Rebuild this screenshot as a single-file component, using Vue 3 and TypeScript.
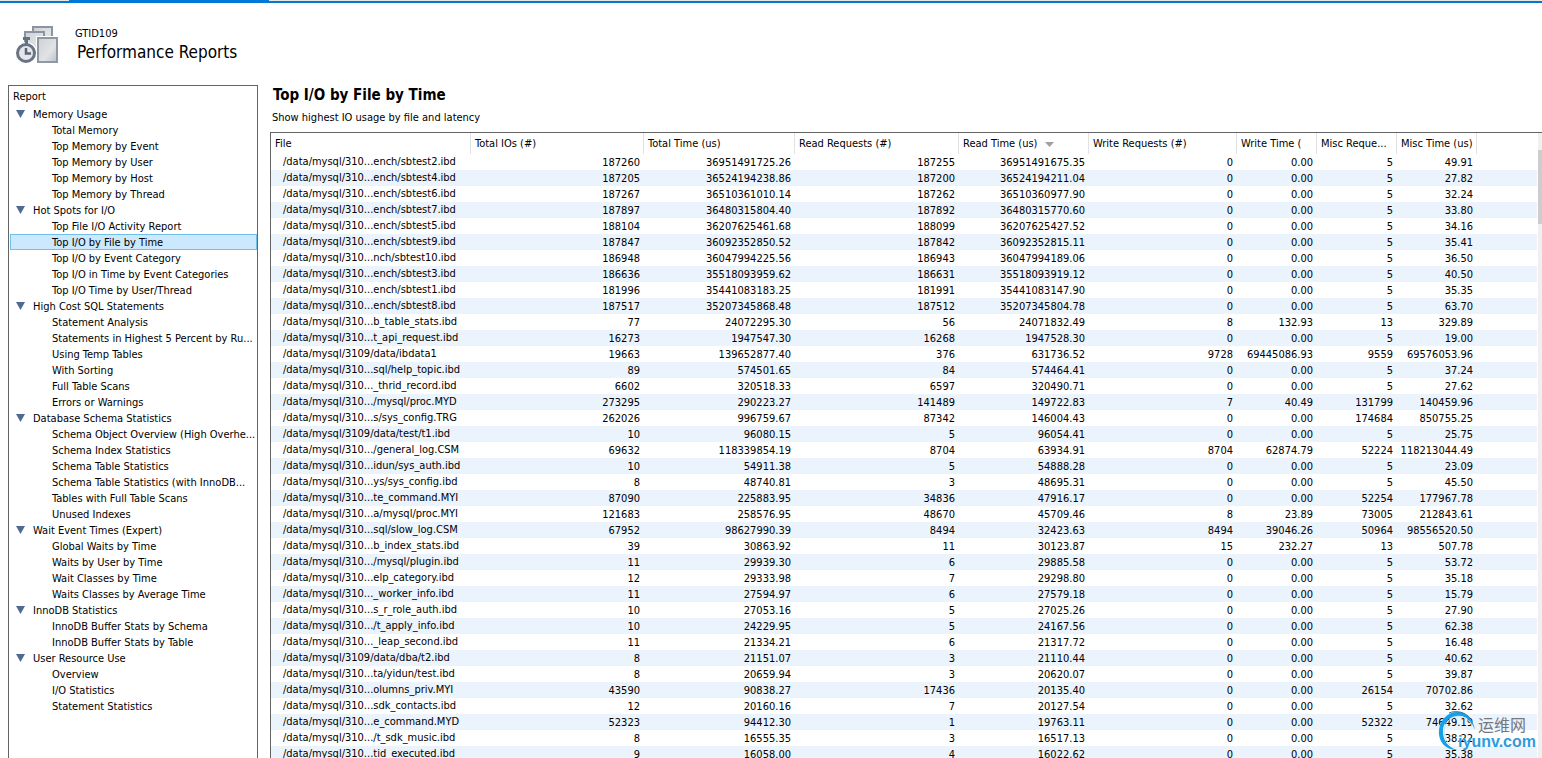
<script setup lang="ts">
import { ref } from 'vue'

interface Group {
  name: string
  items: string[]
}

interface Column {
  label: string
  width: number
  sorted?: boolean
}

const groups: Group[] = [
  {
    name: 'Memory Usage',
    items: ['Total Memory', 'Top Memory by Event', 'Top Memory by User', 'Top Memory by Host', 'Top Memory by Thread'],
  },
  {
    name: 'Hot Spots for I/O',
    items: [
      'Top File I/O Activity Report',
      'Top I/O by File by Time',
      'Top I/O by Event Category',
      'Top I/O in Time by Event Categories',
      'Top I/O Time by User/Thread',
    ],
  },
  {
    name: 'High Cost SQL Statements',
    items: [
      'Statement Analysis',
      'Statements in Highest 5 Percent by Ru...',
      'Using Temp Tables',
      'With Sorting',
      'Full Table Scans',
      'Errors or Warnings',
    ],
  },
  {
    name: 'Database Schema Statistics',
    items: [
      'Schema Object Overview (High Overhe...',
      'Schema Index Statistics',
      'Schema Table Statistics',
      'Schema Table Statistics (with InnoDB...',
      'Tables with Full Table Scans',
      'Unused Indexes',
    ],
  },
  {
    name: 'Wait Event Times (Expert)',
    items: ['Global Waits by Time', 'Waits by User by Time', 'Wait Classes by Time', 'Waits Classes by Average Time'],
  },
  { name: 'InnoDB Statistics', items: ['InnoDB Buffer Stats by Schema', 'InnoDB Buffer Stats by Table'] },
  { name: 'User Resource Use', items: ['Overview', 'I/O Statistics', 'Statement Statistics'] },
]

const columns: Column[] = [
  { label: 'File', width: 200 },
  { label: 'Total IOs (#)', width: 173 },
  { label: 'Total Time (us)', width: 151 },
  { label: 'Read Requests (#)', width: 164 },
  { label: 'Read Time (us)', width: 130, sorted: true },
  { label: 'Write Requests (#)', width: 148 },
  { label: 'Write Time (', width: 80 },
  { label: 'Misc Reque...', width: 80 },
  { label: 'Misc Time (us)', width: 80 },
]

const rows: string[][] = `
/data/mysql/310...ench/sbtest2.ibd 187260 36951491725.26 187255 36951491675.35 0 0.00 5 49.91
/data/mysql/310...ench/sbtest4.ibd 187205 36524194238.86 187200 36524194211.04 0 0.00 5 27.82
/data/mysql/310...ench/sbtest6.ibd 187267 36510361010.14 187262 36510360977.90 0 0.00 5 32.24
/data/mysql/310...ench/sbtest7.ibd 187897 36480315804.40 187892 36480315770.60 0 0.00 5 33.80
/data/mysql/310...ench/sbtest5.ibd 188104 36207625461.68 188099 36207625427.52 0 0.00 5 34.16
/data/mysql/310...ench/sbtest9.ibd 187847 36092352850.52 187842 36092352815.11 0 0.00 5 35.41
/data/mysql/310...nch/sbtest10.ibd 186948 36047994225.56 186943 36047994189.06 0 0.00 5 36.50
/data/mysql/310...ench/sbtest3.ibd 186636 35518093959.62 186631 35518093919.12 0 0.00 5 40.50
/data/mysql/310...ench/sbtest1.ibd 181996 35441083183.25 181991 35441083147.90 0 0.00 5 35.35
/data/mysql/310...ench/sbtest8.ibd 187517 35207345868.48 187512 35207345804.78 0 0.00 5 63.70
/data/mysql/310...b_table_stats.ibd 77 24072295.30 56 24071832.49 8 132.93 13 329.89
/data/mysql/310...t_api_request.ibd 16273 1947547.30 16268 1947528.30 0 0.00 5 19.00
/data/mysql/3109/data/ibdata1 19663 139652877.40 376 631736.52 9728 69445086.93 9559 69576053.96
/data/mysql/310...sql/help_topic.ibd 89 574501.65 84 574464.41 0 0.00 5 37.24
/data/mysql/310..._thrid_record.ibd 6602 320518.33 6597 320490.71 0 0.00 5 27.62
/data/mysql/310.../mysql/proc.MYD 273295 290223.27 141489 149722.83 7 40.49 131799 140459.96
/data/mysql/310...s/sys_config.TRG 262026 996759.67 87342 146004.43 0 0.00 174684 850755.25
/data/mysql/3109/data/test/t1.ibd 10 96080.15 5 96054.41 0 0.00 5 25.75
/data/mysql/310.../general_log.CSM 69632 118339854.19 8704 63934.91 8704 62874.79 52224 118213044.49
/data/mysql/310...idun/sys_auth.ibd 10 54911.38 5 54888.28 0 0.00 5 23.09
/data/mysql/310...ys/sys_config.ibd 8 48740.81 3 48695.31 0 0.00 5 45.50
/data/mysql/310...te_command.MYI 87090 225883.95 34836 47916.17 0 0.00 52254 177967.78
/data/mysql/310...a/mysql/proc.MYI 121683 258576.95 48670 45709.46 8 23.89 73005 212843.61
/data/mysql/310...sql/slow_log.CSM 67952 98627990.39 8494 32423.63 8494 39046.26 50964 98556520.50
/data/mysql/310...b_index_stats.ibd 39 30863.92 11 30123.87 15 232.27 13 507.78
/data/mysql/310.../mysql/plugin.ibd 11 29939.30 6 29885.58 0 0.00 5 53.72
/data/mysql/310...elp_category.ibd 12 29333.98 7 29298.80 0 0.00 5 35.18
/data/mysql/310..._worker_info.ibd 11 27594.97 6 27579.18 0 0.00 5 15.79
/data/mysql/310...s_r_role_auth.ibd 10 27053.16 5 27025.26 0 0.00 5 27.90
/data/mysql/310.../t_apply_info.ibd 10 24229.95 5 24167.56 0 0.00 5 62.38
/data/mysql/310..._leap_second.ibd 11 21334.21 6 21317.72 0 0.00 5 16.48
/data/mysql/3109/data/dba/t2.ibd 8 21151.07 3 21110.44 0 0.00 5 40.62
/data/mysql/310...ta/yidun/test.ibd 8 20659.94 3 20620.07 0 0.00 5 39.87
/data/mysql/310...olumns_priv.MYI 43590 90838.27 17436 20135.40 0 0.00 26154 70702.86
/data/mysql/310...sdk_contacts.ibd 12 20160.16 7 20127.54 0 0.00 5 32.62
/data/mysql/310...e_command.MYD 52323 94412.30 1 19763.11 0 0.00 52322 74649.19
/data/mysql/310.../t_sdk_music.ibd 8 16555.35 3 16517.13 0 0.00 5 38.22
/data/mysql/310...tid_executed.ibd 9 16058.00 4 16022.62 0 0.00 5 35.38
`
  .trim()
  .split('\n')
  .map((line) => line.split(' '))

const selected = ref('Top I/O by File by Time')
const collapsed = ref<string[]>([])

function toggle(name: string) {
  collapsed.value = collapsed.value.includes(name)
    ? collapsed.value.filter((n) => n !== name)
    : [...collapsed.value, name]
}
</script>

<template>
  <div class="app">
    <div class="tabstrip"><span class="tab-active"></span></div>

    <header class="header">
      <svg class="logo" width="44" height="38" viewBox="0 0 44 38" aria-hidden="true">
        <defs>
          <linearGradient id="sheet" x1="0" y1="0" x2="1" y2="1">
            <stop offset="0" stop-color="#cdd0d5" />
            <stop offset="0.6" stop-color="#e1e3e6" />
            <stop offset="1" stop-color="#bbbfc6" />
          </linearGradient>
        </defs>
        <rect x="18" y="1" width="19" height="20" fill="url(#sheet)" stroke="#8a94a2" stroke-width="2" />
        <rect x="10" y="6" width="19" height="22" fill="url(#sheet)" stroke="#8a94a2" stroke-width="2" />
        <rect x="21" y="10" width="23" height="28" fill="#fff" />
        <rect x="23" y="12" width="19" height="24" fill="url(#sheet)" stroke="#8f98a5" stroke-width="2" />
        <circle cx="11" cy="27" r="11" fill="#fff" />
        <path d="M8 11h7v3h-2v5h-3v-5H8z" fill="#66727f" />
        <circle cx="11" cy="27" r="8.500" fill="#e3e6ea" stroke="#687482" stroke-width="3" />
        <path d="M11 22v5.500h5" fill="none" stroke="#596675" stroke-width="2.500" />
      </svg>
      <div class="heading">
        <div class="server">GTID109</div>
        <h1>Performance Reports</h1>
      </div>
    </header>

    <div class="body">
      <nav class="tree" aria-label="Report">
        <div class="tree-title">Report</div>
        <ul>
          <li v-for="group in groups" :key="group.name">
            <button class="group" type="button" :aria-expanded="!collapsed.includes(group.name)" @click="toggle(group.name)">
              <svg :class="['arrow', { closed: collapsed.includes(group.name) }]" width="9" height="8" viewBox="0 0 9 8">
                <path d="M0 0h9L4.500 8z" fill="#4f6a94" />
              </svg>
              {{ group.name }}
            </button>
            <ul v-if="!collapsed.includes(group.name)">
              <li v-for="item in group.items" :key="item">
                <a href="#" :class="['item', { active: item === selected }]" @click.prevent="selected = item">{{ item }}</a>
              </li>
            </ul>
          </li>
        </ul>
      </nav>

      <main class="report">
        <h2>Top I/O by File by Time</h2>
        <p>Show highest IO usage by file and latency</p>
        <div class="grid">
          <div class="grid-view">
            <table>
              <colgroup>
                <col v-for="col in columns" :key="col.label" :style="{ width: col.width + 'px' }" />
                <col />
              </colgroup>
              <thead>
                <tr>
                  <th v-for="col in columns" :key="col.label" scope="col">
                    {{ col.label }}
                    <svg v-if="col.sorted" class="sort" width="9" height="5" viewBox="0 0 9 5">
                      <path d="M0 0h9L4.500 5z" fill="#a0a0a0" />
                    </svg>
                  </th>
                  <td></td>
                </tr>
              </thead>
              <tbody>
                <tr v-for="row in rows" :key="row[0]">
                  <td v-for="(cell, i) in row" :key="i" :class="i === 0 ? 'file' : 'num'">{{ cell }}</td>
                  <td></td>
                </tr>
              </tbody>
            </table>
          </div>
          <div class="scrollbar"><span class="thumb"></span></div>
        </div>
      </main>
    </div>

    <div class="watermark">
      <svg class="ring" width="38" height="40" viewBox="0 0 38 40" aria-hidden="true">
        <path d="M19 39C7 39 0 30 1 19C2 8 11 0 21 1C29 2 35 8 37 19C33 9 27 4 19 5C10 6 5 12 5 20C5 30 10 36 19 39Z" fill="#18a0e6" />
        <path d="M12 34C5 27 4 17 10 10C17 3 29 5 34 14" fill="none" stroke="#bfe6fa" stroke-width="1" />
        <path d="M11 2C18 -1 27 1 32 7" fill="none" stroke="#2676ad" stroke-width="1" />
      </svg>
      <div class="mark-text">
        <span class="mark-cn">运维网</span>
        <span class="mark-url">iyunv.com</span>
      </div>
    </div>
  </div>
</template>

<style>
html,
body {
  margin: 0;
  background: #fff;
}
</style>

<style scoped>
.app {
  position: relative;
  display: flex;
  flex-direction: column;
  height: 100vh;
  overflow: hidden;
  background: #fff;
  color: #000;
  font-family: "DejaVu Sans Condensed", "Noto Sans", sans-serif;
  font-size: 11px;
  line-height: 16px;
}

.tabstrip {
  flex: none;
  height: 1px;
  padding-left: 69px;
  background: #e6e6e2;
  border-bottom: 2px solid #0078d7;
}

.tab-active {
  display: block;
  width: 200px;
  height: 1px;
  background: #0078d7;
}

.header {
  flex: none;
  display: flex;
  gap: 16px;
  height: 59px;
  padding: 23px 0 0 15px;
}

h1 {
  margin: 0 0 0 2px;
  font-size: 17px;
  font-weight: 400;
  line-height: 20px;
}

.body {
  flex: 1;
  display: flex;
  gap: 12px;
  min-height: 0;
  padding-left: 8px;
}

.tree {
  box-sizing: border-box;
  flex: none;
  width: 250px;
  border: 1px solid #646464;
  border-bottom: 0;
  padding-left: 1px;
  overflow: hidden;
  white-space: nowrap;
}

.tree-title {
  height: 20px;
  padding-left: 3px;
  line-height: 22px;
}

ul {
  margin: 0;
  padding: 0;
  list-style: none;
}

.group {
  display: flex;
  align-items: flex-start;
  gap: 8px;
  width: 100%;
  height: 16px;
  padding: 0 0 0 6px;
  border: 0;
  background: none;
  color: inherit;
  font: inherit;
  line-height: 18px;
  text-align: left;
}

.arrow {
  margin-top: 4px;
}

.arrow.closed {
  transform: rotate(-90deg);
}

.item {
  box-sizing: border-box;
  display: block;
  height: 16px;
  padding-left: 41px;
  border: 1px solid transparent;
  color: inherit;
  line-height: 16px;
  text-decoration: none;
}

.item.active {
  border-color: #70c0e7;
  background: #cce8ff;
}

.report {
  flex: 1;
  display: flex;
  flex-direction: column;
  min-width: 0;
}

h2 {
  margin: 0;
  padding: 0 0 0 3px;
  font-size: 15px;
  font-weight: 700;
  line-height: 20px;
}

.report p {
  margin: 0;
  padding: 5px 0 6px 2px;
}

.grid {
  flex: 1;
  display: flex;
  min-height: 0;
  border-top: 1px solid #646464;
  border-left: 1px solid #646464;
}

.grid-view {
  flex: 1;
  min-width: 0;
  padding-right: 1px;
  overflow: hidden;
}

table {
  width: 100%;
  border-spacing: 0;
  table-layout: fixed;
}

th,
td {
  box-sizing: border-box;
  padding: 0;
  overflow: hidden;
  white-space: nowrap;
}

th {
  height: 21px;
  padding-left: 4px;
  border-right: 1px solid #e2e2e2;
  font-weight: 400;
  line-height: 19px;
  text-align: left;
}

.sort {
  margin-left: 4px;
  vertical-align: middle;
}

tbody td {
  height: 16px;
}

tbody tr:nth-child(even) td {
  background: #ebf3fd;
}

.file {
  padding-left: 12px;
  line-height: 14px;
}

.num {
  padding-top: 2px;
  padding-right: 4px;
  line-height: 14px;
  text-align: right;
}

.scrollbar {
  flex: none;
  width: 4px;
  padding-top: 17px;
  background: #f0f0f0;
}

.thumb {
  display: block;
  height: 74px;
  background: #cdcdcd;
}

.watermark {
  position: absolute;
  right: 6px;
  bottom: 7px;
  display: flex;
  align-items: flex-end;
  pointer-events: none;
}

.ring {
  flex: none;
}

.mark-text {
  display: flex;
  flex-direction: column;
  align-items: flex-end;
  margin-left: -18px;
}

.mark-cn {
  padding-right: 10px;
  color: #74777c;
  font-family: "Noto Sans CJK SC", sans-serif;
  font-size: 16px;
  line-height: 18px;
}

.mark-url {
  color: #2f9bdb;
  font-family: "Liberation Sans", sans-serif;
  font-size: 16px;
  font-weight: 700;
  line-height: 18px;
}
</style>
